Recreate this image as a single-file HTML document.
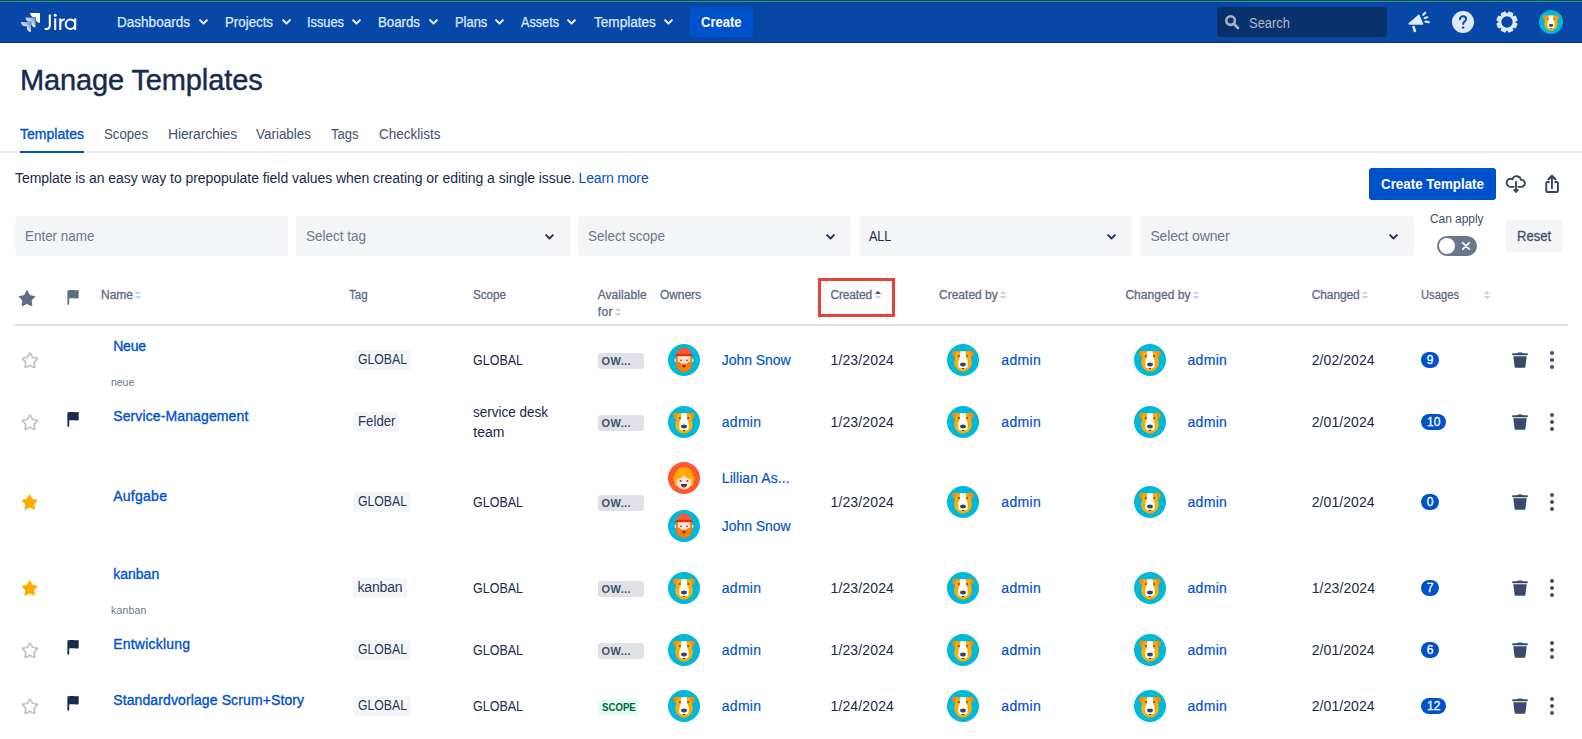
<!DOCTYPE html>
<html><head><meta charset="utf-8"><title>Manage Templates - Jira</title>
<style>
html,body{margin:0;padding:0;background:#fff;}
body{width:1582px;height:739px;position:relative;overflow:hidden;font-family:"Liberation Sans",sans-serif;}
.t{position:absolute;white-space:nowrap;line-height:1;}
.r{position:absolute;}
svg{position:absolute;overflow:visible;}
</style></head><body>
<svg width="0" height="0" style="left:0;top:0"><defs>
<linearGradient id="jg" x1="0.9" y1="0.1" x2="0.35" y2="0.7"><stop offset="0.15" stop-color="#fff" stop-opacity="0.5"/><stop offset="1" stop-color="#fff"/></linearGradient>
<symbol id="dog" viewBox="0 0 32 32">
<circle cx="16" cy="16" r="16" fill="#00B8D9"/>
<path d="M10.200 7.100c-2.700-.9-5.100.2-4.900 2.500.2 2.100 1.500 3.300 3.300 3.600z" fill="#FF8B00"/>
<path d="M21.800 7.100c2.700-.9 5.100.2 4.900 2.500-.2 2.100-1.500 3.300-3.300 3.600z" fill="#FF8B00"/>
<path d="M9.100 8.600C9.100 7.800 9.700 7.200 10.500 7.200H21.500C22.300 7.200 22.900 7.800 22.900 8.600L24.600 16.500C24.900 18.500 24.800 20.300 24.300 21.600 23.800 23 22.800 24 21.600 25.200L20 26.600C19.200 27.300 17.500 27.600 16 27.600 14.500 27.600 12.800 27.300 12 26.600L10.400 25.200C9.200 24 8.200 23 7.700 21.600 7.200 20.300 7.100 18.500 7.400 16.500Z" fill="#FFAB00"/>
<path d="M13.300 7.200H18.700L19 12.500C19.100 14.200 20.700 15.500 20.700 17.500V22C20.700 23.700 19.200 24.500 16 24.500 12.800 24.500 11.300 23.700 11.300 22V17.500C11.300 15.500 12.900 14.200 13 12.500Z" fill="#fff"/>
<ellipse cx="16" cy="20.500" rx="2.900" ry="1.900" fill="#344563"/>
<rect x="14.900" y="24" width="2.200" height="1.100" rx=".5" fill="#344563"/>
<circle cx="11.800" cy="12" r="1.100" fill="#505F79"/><circle cx="20.200" cy="12" r="1.100" fill="#505F79"/>
</symbol>
<symbol id="john" viewBox="0 0 32 32">
<circle cx="16" cy="16" r="16" fill="#00B8D9"/>
<ellipse cx="7.800" cy="16.200" rx="1.300" ry="1.800" fill="#FFD5C8"/><ellipse cx="24.200" cy="16.200" rx="1.300" ry="1.800" fill="#FFD5C8"/>
<path d="M8 12h16v8.200c0 1.500-.5 2.600-1.200 3.500-.3 1.300-1.300 2.200-2.500 2.500-.8 1.200-2.100 1.800-3.200 1.700-.7.500-1.500.5-2.200 0-1.100.1-2.400-.5-3.200-1.700-1.200-.3-2.200-1.200-2.500-2.500-.7-.9-1.200-2-1.200-3.500z" fill="#FF7A00"/>
<path d="M9.800 11.500h12.400v6.300c-1.300 0-2.600.8-3.400 1.700h-5.600c-.8-.9-2.100-1.700-3.400-1.700z" fill="#FFE3DA"/>
<path d="M8.700 10.600c0-4 3.200-6.800 7.300-6.800s7.300 2.800 7.300 6.800z" fill="#FF5630"/>
<rect x="7.300" y="10" width="17.400" height="2.200" rx="1" fill="#DE350B"/>
<rect x="12.200" y="15.600" width="1.700" height="1.500" fill="#505F79"/><rect x="18.100" y="15.600" width="1.700" height="1.500" fill="#505F79"/>
<path d="M14.200 21.300h3.600c0 1.300-.8 2.200-1.800 2.200s-1.800-.9-1.800-2.200z" fill="#344563"/>
</symbol>
<symbol id="lil" viewBox="0 0 32 32">
<circle cx="16" cy="16" r="16" fill="#FF5630"/>
<path d="M16 5.200c5 0 8.600 3.200 9 7.600 1.200 1 2.200 2.800 1.400 4.600-.6 1.300-1 1.800-.9 3.200.1 1.600-.6 3-1.700 3.400H8.200c-1.100-.4-1.800-1.800-1.700-3.400.1-1.400-.3-1.900-.9-3.200-.8-1.800.2-3.600 1.400-4.600.4-4.400 4-7.600 9-7.600z" fill="#FFAB00"/>
<path d="M8.600 17.500c2.800-.3 5.600-1.700 7.400-4.300 1.800 2.600 4.600 4 7.400 4.300v2.700c0 4-3.200 7.200-7.400 7.200s-7.400-3.200-7.400-7.200z" fill="#FFE3DA"/>
<rect x="11.700" y="18.100" width="1.700" height="1.600" fill="#344563"/><rect x="18.600" y="18.100" width="1.700" height="1.600" fill="#344563"/>
<path d="M12.900 22h6.200c0 2-1.400 3.500-3.100 3.500s-3.100-1.500-3.100-3.500z" fill="#253858"/>
<path d="M14.300 24.300c.5-.5 1.100-.7 1.700-.7s1.200.2 1.700.7c-.5.700-1.100 1.200-1.700 1.200s-1.200-.5-1.700-1.200z" fill="#DE350B"/>
</symbol>
<symbol id="starf" viewBox="0 0 16 16"><path d="M8 .6l2.250 4.900 5.250.6-3.900 3.650 1.050 5.350L8 12.450 3.350 15.100 4.400 9.750.5 6.100l5.250-.6z"/></symbol>
<symbol id="flag" viewBox="0 0 12 15"><path d="M.4 1.100C.4.500.8.200 1.300.200h1c3-.4 5.500.5 8.700-.1.400-.1.700.2.700.6v6.900c0 .4-.3.700-.7.800-3 .5-5.500-.5-8.800.1v5.600c0 .5-.4.800-.9.800s-.9-.3-.9-.8z"/></symbol>
<symbol id="trash" viewBox="0 0 16 16"><path d="M5.800.4h4.400l.5.900h4.600c.3 0 .5.200.5.500v.9c0 .3-.2.500-.5.500H.7c-.3 0-.5-.2-.5-.5v-.9c0-.3.200-.5.500-.5h4.600z"/><path d="M1.300 4.300h13.400l-1.300 10.400c-.1.700-.6 1.100-1.200 1.100H3.800c-.6 0-1.100-.4-1.200-1.100z"/></symbol>
<symbol id="chev" viewBox="0 0 10 7"><path d="M1.300 1.300L5 5l3.700-3.700" fill="none" stroke-width="2.200" stroke-linecap="round" stroke-linejoin="round"/></symbol>
<symbol id="sort" viewBox="0 0 6 8"><path d="M3 -.3l3.200 3.300H-.2z"/><path d="M3 8.300L-.2 5h6.400z"/></symbol>
</defs></svg>
<div class="r" style="left:0px;top:0px;width:1582px;height:43px;background:#0747A6;"></div>
<div class="r" style="left:0px;top:0px;width:1582px;height:1px;background:#005A5C;"></div>
<div class="r" style="left:0px;top:1px;width:1582px;height:1px;background:#40878A;"></div>
<div class="r" style="left:0px;top:42px;width:1582px;height:1px;background:#1C2B4F;"></div>
<svg style="left:21px;top:13px" width="19" height="19" viewBox="0 0 24 24"><path fill="#fff" d="M23.013 0H11.455a5.215 5.215 0 0 0 5.215 5.215h2.129v2.057A5.215 5.215 0 0 0 24 12.483V1.005A1.001 1.001 0 0 0 23.013 0Z"/><path fill="url(#jg)" d="M17.294 5.757H5.736a5.215 5.215 0 0 0 5.215 5.214h2.129v2.058a5.218 5.218 0 0 0 5.215 5.214V6.758a1.001 1.001 0 0 0-1.001-1.001z"/><path fill="url(#jg)" d="M11.571 11.513H0a5.218 5.218 0 0 0 5.232 5.215h2.130v2.057A5.215 5.215 0 0 0 12.575 24V12.518a1.005 1.005 0 0 0-1.005-1.005z"/></svg>
<svg style="left:0;top:0" width="90" height="43" viewBox="0 0 90 43"><g fill="none" stroke="#fff" stroke-width="2.050"><path d="M49.800 14.600v10.600c0 2.500-1.500 3.700-3.400 3.700-.6 0-1.200-.1-1.700-.3"/><path d="M55.200 18.400v11.600"/><path d="M60.300 18.400v11.600M60.300 24.500c0-3.300 1.700-5.200 4.500-5"/><circle cx="70.400" cy="24.300" r="4.700"/><path d="M75.200 18.400v11.600"/></g><circle cx="55.200" cy="15.300" r="1.500" fill="#fff"/></svg>
<span class="t" style="left:117.0px;top:15.45px;font-size:14px;color:#DEEBFF;transform:scaleX(0.9670);transform-origin:0 50%;-webkit-text-stroke:0.25px #DEEBFF;">Dashboards</span>
<svg style="left:198.7px;top:19.300px" width="9" height="6.300" viewBox="0 0 10 7"><path d="M1.300 1.300L5 5l3.700-3.700" fill="none" stroke="#DEEBFF" stroke-width="2.300" stroke-linecap="round" stroke-linejoin="round"/></svg>
<span class="t" style="left:225.0px;top:15.45px;font-size:14px;color:#DEEBFF;transform:scaleX(0.9491);transform-origin:0 50%;-webkit-text-stroke:0.25px #DEEBFF;">Projects</span>
<svg style="left:281.7px;top:19.300px" width="9" height="6.300" viewBox="0 0 10 7"><path d="M1.300 1.300L5 5l3.700-3.700" fill="none" stroke="#DEEBFF" stroke-width="2.300" stroke-linecap="round" stroke-linejoin="round"/></svg>
<span class="t" style="left:307.0px;top:15.45px;font-size:14px;color:#DEEBFF;transform:scaleX(0.9145);transform-origin:0 50%;-webkit-text-stroke:0.25px #DEEBFF;">Issues</span>
<svg style="left:352.2px;top:19.300px" width="9" height="6.300" viewBox="0 0 10 7"><path d="M1.300 1.300L5 5l3.700-3.700" fill="none" stroke="#DEEBFF" stroke-width="2.300" stroke-linecap="round" stroke-linejoin="round"/></svg>
<span class="t" style="left:378.0px;top:15.45px;font-size:14px;color:#DEEBFF;transform:scaleX(0.9468);transform-origin:0 50%;-webkit-text-stroke:0.25px #DEEBFF;">Boards</span>
<svg style="left:428.7px;top:19.300px" width="9" height="6.300" viewBox="0 0 10 7"><path d="M1.300 1.300L5 5l3.700-3.700" fill="none" stroke="#DEEBFF" stroke-width="2.300" stroke-linecap="round" stroke-linejoin="round"/></svg>
<span class="t" style="left:454.7px;top:15.45px;font-size:14px;color:#DEEBFF;transform:scaleX(0.9223);transform-origin:0 50%;-webkit-text-stroke:0.25px #DEEBFF;">Plans</span>
<svg style="left:495.2px;top:19.300px" width="9" height="6.300" viewBox="0 0 10 7"><path d="M1.300 1.300L5 5l3.700-3.700" fill="none" stroke="#DEEBFF" stroke-width="2.300" stroke-linecap="round" stroke-linejoin="round"/></svg>
<span class="t" style="left:521.0px;top:15.45px;font-size:14px;color:#DEEBFF;transform:scaleX(0.9045);transform-origin:0 50%;-webkit-text-stroke:0.25px #DEEBFF;">Assets</span>
<svg style="left:567.2px;top:19.300px" width="9" height="6.300" viewBox="0 0 10 7"><path d="M1.300 1.300L5 5l3.700-3.700" fill="none" stroke="#DEEBFF" stroke-width="2.300" stroke-linecap="round" stroke-linejoin="round"/></svg>
<span class="t" style="left:593.8px;top:15.45px;font-size:14px;color:#DEEBFF;transform:scaleX(0.9701);transform-origin:0 50%;-webkit-text-stroke:0.25px #DEEBFF;">Templates</span>
<svg style="left:663.7px;top:19.300px" width="9" height="6.300" viewBox="0 0 10 7"><path d="M1.300 1.300L5 5l3.700-3.700" fill="none" stroke="#DEEBFF" stroke-width="2.300" stroke-linecap="round" stroke-linejoin="round"/></svg>
<div class="r" style="left:690px;top:7px;width:63px;height:30px;background:#0052CC;border-radius:3px;"></div>
<span class="t" style="left:701.0px;top:15.15px;font-size:14px;color:#fff;font-weight:700;transform:scaleX(0.9316);transform-origin:0 50%;">Create</span>
<div class="r" style="left:1217px;top:7px;width:170px;height:30px;background:#09326C;border-radius:3px;"></div>
<svg style="left:1224px;top:14px" width="16" height="16" viewBox="0 0 16 16"><circle cx="6.600" cy="6.600" r="4.300" fill="none" stroke="#ABB3C0" stroke-width="2.600"/><path d="M10.200 10.200l3.800 3.800" stroke="#ABB3C0" stroke-width="2.700" stroke-linecap="round"/></svg>
<span class="t" style="left:1249.0px;top:15.65px;font-size:14px;color:#B3BAC5;transform:scaleX(0.9243);transform-origin:0 50%;">Search</span>
<svg style="left:1400px;top:5px" width="40" height="35" viewBox="0 0 40 35"><path d="M9.200 18.600L18.900 10.200l3.700 8.900H9.600z" fill="#DEEBFF" stroke="#DEEBFF" stroke-width="1.400" stroke-linejoin="round"/><path d="M13.300 21l1.900 6" stroke="#DEEBFF" stroke-width="2.500" stroke-linecap="butt"/><g stroke="#DEEBFF" stroke-width="2.200" stroke-linecap="round"><path d="M23.300 9.800l1.900-2"/><path d="M24.700 13l2.600-.7"/><path d="M25.500 16.650l3.300.45"/></g></svg>
<svg style="left:1452px;top:11px" width="22" height="22" viewBox="0 0 22 22"><circle cx="11" cy="11" r="11" fill="#DEEBFF"/><path d="M7.900 8.300c0-1.900 1.400-3 3.100-3s3.100 1.100 3.100 2.800c0 2.400-3 2.400-3 5" fill="none" stroke="#0747A6" stroke-width="1.900" stroke-linecap="round"/><circle cx="11.100" cy="16.600" r="1.200" fill="#0747A6"/></svg>
<svg style="left:1496px;top:10.800px" width="22" height="22" viewBox="0 0 22 22"><path d="M11.00 3.60 L12.81 0.76 L16.97 2.48 L16.23 5.77 L16.23 5.77 L19.52 5.03 L21.24 9.19 L18.40 11.00 L18.40 11.00 L21.24 12.81 L19.52 16.97 L16.23 16.23 L16.23 16.23 L16.97 19.52 L12.81 21.24 L11.00 18.40 L11.00 18.40 L9.19 21.24 L5.03 19.52 L5.77 16.23 L5.77 16.23 L2.48 16.97 L0.76 12.81 L3.60 11.00 L3.60 11.00 L0.76 9.19 L2.48 5.03 L5.77 5.77 L5.77 5.77 L5.03 2.48 L9.19 0.76 L11.00 3.60Z" fill="#DEEBFF" stroke="#DEEBFF" stroke-width="0.900" stroke-linejoin="round"/><circle cx="11" cy="11" r="5.700" fill="#0747A6"/></svg>
<svg style="left:1539px;top:10px" width="24" height="24"><use href="#dog" width="24" height="24"/></svg>
<span class="t" style="left:20.0px;top:66.35px;font-size:29px;color:#172B4D;letter-spacing:-0.125px;-webkit-text-stroke:0.45px #172B4D;">Manage Templates</span>
<div class="r" style="left:0px;top:151px;width:1582px;height:2px;background:#EBECF0;"></div>
<div class="r" style="left:20px;top:151px;width:64px;height:2px;background:#0052CC;"></div>
<span class="t" style="left:20.0px;top:126.75px;font-size:14px;color:#0052CC;letter-spacing:0.022px;-webkit-text-stroke:0.35px #0052CC;">Templates</span>
<span class="t" style="left:104.0px;top:126.75px;font-size:14px;color:#42526E;transform:scaleX(0.9423);transform-origin:0 50%;">Scopes</span>
<span class="t" style="left:168.0px;top:126.75px;font-size:14px;color:#42526E;letter-spacing:-0.164px;">Hierarchies</span>
<span class="t" style="left:256.0px;top:126.75px;font-size:14px;color:#42526E;transform:scaleX(0.9594);transform-origin:0 50%;">Variables</span>
<span class="t" style="left:331.0px;top:126.75px;font-size:14px;color:#42526E;transform:scaleX(0.9299);transform-origin:0 50%;">Tags</span>
<span class="t" style="left:378.5px;top:126.75px;font-size:14px;color:#42526E;transform:scaleX(0.9640);transform-origin:0 50%;">Checklists</span>
<span class="t" style="left:15.0px;top:171.15px;font-size:14px;color:#172B4D;letter-spacing:-0.054px;">Template is an easy way to prepopulate field values when creating or editing a single issue.</span>
<span class="t" style="left:578.5px;top:171.15px;font-size:14px;color:#0052CC;letter-spacing:-0.159px;">Learn more</span>
<div class="r" style="left:1369px;top:168px;width:127px;height:32px;background:#0052CC;border-radius:3px;"></div>
<span class="t" style="left:1381.0px;top:177.15px;font-size:14px;color:#fff;font-weight:700;transform:scaleX(0.9547);transform-origin:0 50%;">Create Template</span>
<svg style="left:1495px;top:165px" width="80" height="40" viewBox="0 0 80 40"><g fill="none" stroke="#344563" stroke-width="1.900" stroke-linecap="round" stroke-linejoin="round">
<path d="M18.700 21.850H15.600A4 4 0 1 1 17.500 14.300A4.300 4.300 0 0 1 25.900 14.900A3.500 3.500 0 1 1 26.800 21.850H23.400"/>
<path d="M21 16.800v8"/>
<path d="M53.900 17.050H52.250a1 1 0 0 0-1 1V25.950a1 1 0 0 0 1 1H61.950a1 1 0 0 0 1-1V18.050a1 1 0 0 0-1-1H60.300"/>
<path d="M56.950 11.600V23.300"/>
<path d="M53.500 14.300L56.950 10.850L60.400 14.300" stroke-width="2.200"/>
</g><path d="M18.500 24.700h5L21 27.500z" fill="#344563" stroke="#344563" stroke-width="1.100" stroke-linejoin="round"/></svg>
<div class="r" style="left:15px;top:216px;width:273px;height:40px;background:#F4F5F7;border-radius:3px;"></div>
<span class="t" style="left:25.4px;top:228.85px;font-size:14px;color:#6B778C;transform:scaleX(0.9590);transform-origin:0 50%;">Enter name</span>
<div class="r" style="left:296px;top:216px;width:274px;height:40px;background:#F4F5F7;border-radius:3px;"></div>
<span class="t" style="left:306.4px;top:228.85px;font-size:14px;color:#6B778C;transform:scaleX(0.9637);transform-origin:0 50%;">Select tag</span>
<svg style="left:545.1px;top:233.700px" width="9" height="6.300" viewBox="0 0 10 7"><use href="#chev" stroke="#253858"/></svg>
<div class="r" style="left:578px;top:216px;width:273px;height:40px;background:#F4F5F7;border-radius:3px;"></div>
<span class="t" style="left:588.4px;top:228.85px;font-size:14px;color:#6B778C;transform:scaleX(0.9606);transform-origin:0 50%;">Select scope</span>
<svg style="left:826.1px;top:233.700px" width="9" height="6.300" viewBox="0 0 10 7"><use href="#chev" stroke="#253858"/></svg>
<div class="r" style="left:859px;top:216px;width:273px;height:40px;background:#F4F5F7;border-radius:3px;"></div>
<span class="t" style="left:869.4px;top:228.85px;font-size:14px;color:#172B4D;transform:scaleX(0.8952);transform-origin:0 50%;">ALL</span>
<svg style="left:1107.1px;top:233.700px" width="9" height="6.300" viewBox="0 0 10 7"><use href="#chev" stroke="#253858"/></svg>
<div class="r" style="left:1140px;top:216px;width:274px;height:40px;background:#F4F5F7;border-radius:3px;"></div>
<span class="t" style="left:1150.4px;top:228.85px;font-size:14px;color:#6B778C;letter-spacing:-0.161px;">Select owner</span>
<svg style="left:1389.1px;top:233.700px" width="9" height="6.300" viewBox="0 0 10 7"><use href="#chev" stroke="#253858"/></svg>
<span class="t" style="left:1430.0px;top:212.84px;font-size:12px;color:#42526E;letter-spacing:-0.059px;">Can apply</span>
<div class="r" style="left:1437px;top:236px;width:40px;height:20px;background:#6B778C;border-radius:10px;"></div>
<div class="r" style="left:1439px;top:238px;width:16px;height:16px;border-radius:8px;background:#fff"></div>
<svg style="left:1461px;top:241px" width="10" height="10" viewBox="0 0 10 10"><path d="M1.800 1.800l6.400 6.400M8.200 1.800L1.800 8.200" stroke="#fff" stroke-width="1.800" stroke-linecap="round"/></svg>
<div class="r" style="left:1505px;top:220px;width:58px;height:32px;background:#F4F5F7;border-radius:3px;"></div>
<span class="t" style="left:1517.0px;top:229.15px;font-size:14px;color:#42526E;transform:scaleX(0.9297);transform-origin:0 50%;-webkit-text-stroke:0.3px #42526E;">Reset</span>
<svg style="left:15.80px;top:287.90px" width="22.00" height="22.00" viewBox="0 0 22.00 22.00"><path d="M10.37 2.84Q11.00 1.65 11.63 2.84L13.57 6.52Q13.86 7.07 14.46 7.17L18.56 7.88Q19.89 8.11 18.95 9.08L16.05 12.06Q15.62 12.50 15.71 13.11L16.30 17.23Q16.50 18.56 15.29 17.97L11.55 16.13Q11.00 15.86 10.45 16.13L6.71 17.97Q5.50 18.56 5.70 17.23L6.29 13.11Q6.38 12.50 5.95 12.06L3.05 9.08Q2.11 8.11 3.44 7.88L7.54 7.17Q8.14 7.07 8.43 6.52Z" fill="#5E6C84"/></svg>
<svg style="left:67.100px;top:290.200px" width="12" height="15" viewBox="0 0 12 15"><use href="#flag" fill="#5E6C84"/></svg>
<span class="t" style="left:101.0px;top:288.54px;font-size:12px;color:#5E6C84;letter-spacing:-0.002px;-webkit-text-stroke:0.3px #5E6C84;">Name</span>
<svg style="left:135.2px;top:290.59999999999997px" width="6" height="8" viewBox="0 0 6 8"><use href="#sort" fill="#CFD3DA"/></svg>
<span class="t" style="left:349.0px;top:288.54px;font-size:12px;color:#5E6C84;transform:scaleX(0.9614);transform-origin:0 50%;-webkit-text-stroke:0.3px #5E6C84;">Tag</span>
<span class="t" style="left:473.3px;top:288.54px;font-size:12px;color:#5E6C84;transform:scaleX(0.9669);transform-origin:0 50%;-webkit-text-stroke:0.3px #5E6C84;">Scope</span>
<span class="t" style="left:597.7px;top:288.54px;font-size:12px;color:#5E6C84;letter-spacing:0.069px;-webkit-text-stroke:0.3px #5E6C84;">Available</span>
<span class="t" style="left:597.7px;top:306.14px;font-size:12px;color:#5E6C84;letter-spacing:0.432px;-webkit-text-stroke:0.3px #5E6C84;">for</span>
<svg style="left:615.2px;top:308.2px" width="6" height="8" viewBox="0 0 6 8"><use href="#sort" fill="#CFD3DA"/></svg>
<span class="t" style="left:660.0px;top:288.54px;font-size:12px;color:#5E6C84;letter-spacing:-0.074px;-webkit-text-stroke:0.3px #5E6C84;">Owners</span>
<span class="t" style="left:830.5px;top:288.54px;font-size:12px;color:#5E6C84;letter-spacing:-0.170px;-webkit-text-stroke:0.3px #5E6C84;">Created</span>
<svg style="left:875.2px;top:290.59999999999997px" width="6" height="8" viewBox="0 0 6 8"><path d="M3 -.3l3.200 3.300H-.2z" fill="#4C5B78"/><path d="M3 8.300L-.2 5h6.400z" fill="#CFD3DA"/></svg>
<span class="t" style="left:939.0px;top:288.54px;font-size:12px;color:#5E6C84;letter-spacing:0.010px;-webkit-text-stroke:0.3px #5E6C84;">Created by</span>
<svg style="left:1000px;top:290.59999999999997px" width="6" height="8" viewBox="0 0 6 8"><use href="#sort" fill="#CFD3DA"/></svg>
<span class="t" style="left:1125.4px;top:288.54px;font-size:12px;color:#5E6C84;letter-spacing:0.039px;-webkit-text-stroke:0.3px #5E6C84;">Changed by</span>
<svg style="left:1193.3px;top:290.59999999999997px" width="6" height="8" viewBox="0 0 6 8"><use href="#sort" fill="#CFD3DA"/></svg>
<span class="t" style="left:1311.7px;top:288.54px;font-size:12px;color:#5E6C84;letter-spacing:-0.101px;-webkit-text-stroke:0.3px #5E6C84;">Changed</span>
<svg style="left:1362px;top:290.59999999999997px" width="6" height="8" viewBox="0 0 6 8"><use href="#sort" fill="#CFD3DA"/></svg>
<span class="t" style="left:1420.8px;top:288.54px;font-size:12px;color:#5E6C84;transform:scaleX(0.9340);transform-origin:0 50%;-webkit-text-stroke:0.3px #5E6C84;">Usages</span>
<svg style="left:1484.2px;top:290.59999999999997px" width="6" height="8" viewBox="0 0 6 8"><use href="#sort" fill="#CFD3DA"/></svg>
<div class="r" style="left:818px;top:278px;width:71px;height:33px;border:3px solid #E8403A;"></div>
<div class="r" style="left:15px;top:324px;width:1553px;height:2px;background:#DFE1E6;"></div>
<svg style="left:18.95px;top:349.55px" width="21.90" height="21.90" viewBox="0 0 21.90 21.90"><path d="M10.38 3.60Q10.95 2.53 11.52 3.60L13.27 6.92Q13.53 7.41 14.07 7.50L17.77 8.14Q18.96 8.35 18.12 9.22L15.50 11.91Q15.12 12.30 15.20 12.85L15.73 16.56Q15.90 17.77 14.81 17.23L11.45 15.57Q10.95 15.33 10.45 15.57L7.09 17.23Q6.00 17.77 6.17 16.56L6.70 12.85Q6.78 12.30 6.40 11.91L3.78 9.22Q2.94 8.35 4.13 8.14L7.83 7.50Q8.37 7.41 8.63 6.92Z" fill="none" stroke="#C1C3C6" stroke-width="1.75" stroke-linejoin="round"/></svg>
<span class="t" style="left:113.2px;top:339.35px;font-size:14px;color:#0052CC;letter-spacing:-0.192px;-webkit-text-stroke:0.35px #0052CC;">Neue</span>
<span class="t" style="left:111.0px;top:377.11px;font-size:10.5px;color:#6B778C;letter-spacing:-0.039px;">neue</span>
<div class="r" style="left:353px;top:350px;width:58px;height:20px;background:#F4F5F7;border-radius:3px;"></div>
<span class="t" style="left:357.5px;top:352.35px;font-size:14px;color:#253858;transform:scaleX(0.8746);transform-origin:0 50%;">GLOBAL</span>
<span class="t" style="left:473.3px;top:353.05px;font-size:14px;color:#172B4D;transform:scaleX(0.8925);transform-origin:0 50%;">GLOBAL</span>
<div class="r" style="left:598px;top:353px;width:46px;height:16px;background:#DFE1E6;border-radius:3px;"></div>
<span class="t" style="left:601.5px;top:356.49px;font-size:11px;color:#42526E;font-weight:700;letter-spacing:0.400px;">OW...</span>
<svg style="left:668.0px;top:344.0px" width="32" height="32"><use href="#john" width="32" height="32"/></svg>
<span class="t" style="left:721.8px;top:353.15px;font-size:14px;color:#0052CC;letter-spacing:-0.052px;-webkit-text-stroke:0.15px #0052CC;">John Snow</span>
<span class="t" style="left:830.5px;top:353.15px;font-size:14px;color:#172B4D;letter-spacing:0.136px;">1/23/2024</span>
<svg style="left:947.0px;top:344.0px" width="32" height="32"><use href="#dog" width="32" height="32"/></svg>
<span class="t" style="left:1001.3px;top:353.15px;font-size:14px;color:#0052CC;letter-spacing:0.314px;-webkit-text-stroke:0.2px #0052CC;">admin</span>
<svg style="left:1134.0px;top:344.0px" width="32" height="32"><use href="#dog" width="32" height="32"/></svg>
<span class="t" style="left:1187.5px;top:353.15px;font-size:14px;color:#0052CC;letter-spacing:0.314px;-webkit-text-stroke:0.2px #0052CC;">admin</span>
<span class="t" style="left:1311.7px;top:353.15px;font-size:14px;color:#172B4D;letter-spacing:0.080px;">2/02/2024</span>
<div class="r" style="left:1421px;top:352px;width:18px;height:16px;background:#0052CC;border-radius:8px;"></div>
<span class="t" style="left:1426.8px;top:354.14px;font-size:12px;color:#fff;letter-spacing:0.027px;-webkit-text-stroke:0.3px #fff;">9</span>
<svg style="left:1512px;top:352px" width="16" height="16" viewBox="0 0 16 16"><use href="#trash" fill="#3B4A6B"/></svg>
<svg style="left:1548px;top:350px" width="8" height="20" viewBox="0 0 8 20"><circle cx="4" cy="3" r="2" fill="#42526E"/><circle cx="4" cy="10" r="2" fill="#42526E"/><circle cx="4" cy="17" r="2" fill="#42526E"/></svg>
<svg style="left:18.95px;top:411.55px" width="21.90" height="21.90" viewBox="0 0 21.90 21.90"><path d="M10.38 3.60Q10.95 2.53 11.52 3.60L13.27 6.92Q13.53 7.41 14.07 7.50L17.77 8.14Q18.96 8.35 18.12 9.22L15.50 11.91Q15.12 12.30 15.20 12.85L15.73 16.56Q15.90 17.77 14.81 17.23L11.45 15.57Q10.95 15.33 10.45 15.57L7.09 17.23Q6.00 17.77 6.17 16.56L6.70 12.85Q6.78 12.30 6.40 11.91L3.78 9.22Q2.94 8.35 4.13 8.14L7.83 7.50Q8.37 7.41 8.63 6.92Z" fill="none" stroke="#C1C3C6" stroke-width="1.75" stroke-linejoin="round"/></svg>
<svg style="left:67.000px;top:412.3px" width="12" height="15" viewBox="0 0 12 15"><use href="#flag" fill="#172B4D"/></svg>
<span class="t" style="left:113.2px;top:409.35px;font-size:14px;color:#0052CC;letter-spacing:0.119px;-webkit-text-stroke:0.35px #0052CC;">Service-Management</span>
<div class="r" style="left:353px;top:412px;width:46px;height:20px;background:#F4F5F7;border-radius:3px;"></div>
<span class="t" style="left:357.5px;top:414.35px;font-size:14px;color:#253858;transform:scaleX(0.9450);transform-origin:0 50%;">Felder</span>
<span class="t" style="left:473.3px;top:405.25px;font-size:14px;color:#172B4D;transform:scaleX(0.9639);transform-origin:0 50%;">service desk</span>
<span class="t" style="left:473.3px;top:425.25px;font-size:14px;color:#172B4D;letter-spacing:-0.031px;">team</span>
<div class="r" style="left:598px;top:415px;width:46px;height:16px;background:#DFE1E6;border-radius:3px;"></div>
<span class="t" style="left:601.5px;top:418.49px;font-size:11px;color:#42526E;font-weight:700;letter-spacing:0.400px;">OW...</span>
<svg style="left:668.0px;top:406.0px" width="32" height="32"><use href="#dog" width="32" height="32"/></svg>
<span class="t" style="left:721.8px;top:415.15px;font-size:14px;color:#0052CC;letter-spacing:0.274px;-webkit-text-stroke:0.15px #0052CC;">admin</span>
<span class="t" style="left:830.5px;top:415.15px;font-size:14px;color:#172B4D;letter-spacing:0.136px;">1/23/2024</span>
<svg style="left:947.0px;top:406.0px" width="32" height="32"><use href="#dog" width="32" height="32"/></svg>
<span class="t" style="left:1001.3px;top:415.15px;font-size:14px;color:#0052CC;letter-spacing:0.314px;-webkit-text-stroke:0.2px #0052CC;">admin</span>
<svg style="left:1134.0px;top:406.0px" width="32" height="32"><use href="#dog" width="32" height="32"/></svg>
<span class="t" style="left:1187.5px;top:415.15px;font-size:14px;color:#0052CC;letter-spacing:0.314px;-webkit-text-stroke:0.2px #0052CC;">admin</span>
<span class="t" style="left:1311.7px;top:415.15px;font-size:14px;color:#172B4D;letter-spacing:0.080px;">2/01/2024</span>
<div class="r" style="left:1421px;top:414px;width:25px;height:16px;background:#0052CC;border-radius:8px;"></div>
<span class="t" style="left:1427.0px;top:416.14px;font-size:12px;color:#fff;letter-spacing:0.027px;-webkit-text-stroke:0.3px #fff;">10</span>
<svg style="left:1512px;top:414px" width="16" height="16" viewBox="0 0 16 16"><use href="#trash" fill="#3B4A6B"/></svg>
<svg style="left:1548px;top:412px" width="8" height="20" viewBox="0 0 8 20"><circle cx="4" cy="3" r="2" fill="#42526E"/><circle cx="4" cy="10" r="2" fill="#42526E"/><circle cx="4" cy="17" r="2" fill="#42526E"/></svg>
<svg style="left:19.30px;top:491.75px" width="21.40" height="21.40" viewBox="0 0 21.40 21.40"><path d="M10.09 2.80Q10.70 1.65 11.31 2.80L13.19 6.37Q13.47 6.89 14.05 6.99L18.02 7.68Q19.31 7.90 18.40 8.84L15.59 11.73Q15.18 12.15 15.26 12.74L15.83 16.73Q16.02 18.02 14.85 17.45L11.23 15.67Q10.70 15.41 10.17 15.67L6.55 17.45Q5.38 18.02 5.57 16.73L6.14 12.74Q6.22 12.15 5.81 11.73L3.00 8.84Q2.09 7.90 3.38 7.68L7.35 6.99Q7.93 6.89 8.21 6.37Z" fill="#FFAB00"/></svg>
<span class="t" style="left:113.2px;top:489.35px;font-size:14px;color:#0052CC;letter-spacing:0.263px;-webkit-text-stroke:0.35px #0052CC;">Aufgabe</span>
<div class="r" style="left:353px;top:492px;width:58px;height:20px;background:#F4F5F7;border-radius:3px;"></div>
<span class="t" style="left:357.5px;top:494.35px;font-size:14px;color:#253858;transform:scaleX(0.8746);transform-origin:0 50%;">GLOBAL</span>
<span class="t" style="left:473.3px;top:495.05px;font-size:14px;color:#172B4D;transform:scaleX(0.8925);transform-origin:0 50%;">GLOBAL</span>
<div class="r" style="left:598px;top:495px;width:46px;height:16px;background:#DFE1E6;border-radius:3px;"></div>
<span class="t" style="left:601.5px;top:498.49px;font-size:11px;color:#42526E;font-weight:700;letter-spacing:0.400px;">OW...</span>
<svg style="left:668.0px;top:462.0px" width="32" height="32"><use href="#lil" width="32" height="32"/></svg>
<span class="t" style="left:721.8px;top:471.15px;font-size:14px;color:#0052CC;letter-spacing:0.067px;-webkit-text-stroke:0.15px #0052CC;">Lillian As...</span>
<svg style="left:668.0px;top:510.0px" width="32" height="32"><use href="#john" width="32" height="32"/></svg>
<span class="t" style="left:721.8px;top:519.15px;font-size:14px;color:#0052CC;letter-spacing:-0.052px;-webkit-text-stroke:0.15px #0052CC;">John Snow</span>
<span class="t" style="left:830.5px;top:495.15px;font-size:14px;color:#172B4D;letter-spacing:0.136px;">1/23/2024</span>
<svg style="left:947.0px;top:486.0px" width="32" height="32"><use href="#dog" width="32" height="32"/></svg>
<span class="t" style="left:1001.3px;top:495.15px;font-size:14px;color:#0052CC;letter-spacing:0.314px;-webkit-text-stroke:0.2px #0052CC;">admin</span>
<svg style="left:1134.0px;top:486.0px" width="32" height="32"><use href="#dog" width="32" height="32"/></svg>
<span class="t" style="left:1187.5px;top:495.15px;font-size:14px;color:#0052CC;letter-spacing:0.314px;-webkit-text-stroke:0.2px #0052CC;">admin</span>
<span class="t" style="left:1311.7px;top:495.15px;font-size:14px;color:#172B4D;letter-spacing:0.080px;">2/01/2024</span>
<div class="r" style="left:1421px;top:494px;width:18px;height:16px;background:#0052CC;border-radius:8px;"></div>
<span class="t" style="left:1426.8px;top:496.14px;font-size:12px;color:#fff;letter-spacing:0.027px;-webkit-text-stroke:0.3px #fff;">0</span>
<svg style="left:1512px;top:494px" width="16" height="16" viewBox="0 0 16 16"><use href="#trash" fill="#3B4A6B"/></svg>
<svg style="left:1548px;top:492px" width="8" height="20" viewBox="0 0 8 20"><circle cx="4" cy="3" r="2" fill="#42526E"/><circle cx="4" cy="10" r="2" fill="#42526E"/><circle cx="4" cy="17" r="2" fill="#42526E"/></svg>
<svg style="left:19.30px;top:577.75px" width="21.40" height="21.40" viewBox="0 0 21.40 21.40"><path d="M10.09 2.80Q10.70 1.65 11.31 2.80L13.19 6.37Q13.47 6.89 14.05 6.99L18.02 7.68Q19.31 7.90 18.40 8.84L15.59 11.73Q15.18 12.15 15.26 12.74L15.83 16.73Q16.02 18.02 14.85 17.45L11.23 15.67Q10.70 15.41 10.17 15.67L6.55 17.45Q5.38 18.02 5.57 16.73L6.14 12.74Q6.22 12.15 5.81 11.73L3.00 8.84Q2.09 7.90 3.38 7.68L7.35 6.99Q7.93 6.89 8.21 6.37Z" fill="#FFAB00"/></svg>
<span class="t" style="left:113.2px;top:567.35px;font-size:14px;color:#0052CC;letter-spacing:0.012px;-webkit-text-stroke:0.35px #0052CC;">kanban</span>
<span class="t" style="left:111.0px;top:605.11px;font-size:10.5px;color:#6B778C;letter-spacing:0.176px;">kanban</span>
<div class="r" style="left:353px;top:578px;width:54px;height:20px;background:#F4F5F7;border-radius:3px;"></div>
<span class="t" style="left:357.5px;top:580.35px;font-size:14px;color:#253858;letter-spacing:-0.155px;">kanban</span>
<span class="t" style="left:473.3px;top:581.05px;font-size:14px;color:#172B4D;transform:scaleX(0.8925);transform-origin:0 50%;">GLOBAL</span>
<div class="r" style="left:598px;top:581px;width:46px;height:16px;background:#DFE1E6;border-radius:3px;"></div>
<span class="t" style="left:601.5px;top:584.49px;font-size:11px;color:#42526E;font-weight:700;letter-spacing:0.400px;">OW...</span>
<svg style="left:668.0px;top:572.0px" width="32" height="32"><use href="#dog" width="32" height="32"/></svg>
<span class="t" style="left:721.8px;top:581.15px;font-size:14px;color:#0052CC;letter-spacing:0.274px;-webkit-text-stroke:0.15px #0052CC;">admin</span>
<span class="t" style="left:830.5px;top:581.15px;font-size:14px;color:#172B4D;letter-spacing:0.136px;">1/23/2024</span>
<svg style="left:947.0px;top:572.0px" width="32" height="32"><use href="#dog" width="32" height="32"/></svg>
<span class="t" style="left:1001.3px;top:581.15px;font-size:14px;color:#0052CC;letter-spacing:0.314px;-webkit-text-stroke:0.2px #0052CC;">admin</span>
<svg style="left:1134.0px;top:572.0px" width="32" height="32"><use href="#dog" width="32" height="32"/></svg>
<span class="t" style="left:1187.5px;top:581.15px;font-size:14px;color:#0052CC;letter-spacing:0.314px;-webkit-text-stroke:0.2px #0052CC;">admin</span>
<span class="t" style="left:1311.7px;top:581.15px;font-size:14px;color:#172B4D;letter-spacing:0.136px;">1/23/2024</span>
<div class="r" style="left:1421px;top:580px;width:18px;height:16px;background:#0052CC;border-radius:8px;"></div>
<span class="t" style="left:1426.8px;top:582.14px;font-size:12px;color:#fff;letter-spacing:0.027px;-webkit-text-stroke:0.3px #fff;">7</span>
<svg style="left:1512px;top:580px" width="16" height="16" viewBox="0 0 16 16"><use href="#trash" fill="#3B4A6B"/></svg>
<svg style="left:1548px;top:578px" width="8" height="20" viewBox="0 0 8 20"><circle cx="4" cy="3" r="2" fill="#42526E"/><circle cx="4" cy="10" r="2" fill="#42526E"/><circle cx="4" cy="17" r="2" fill="#42526E"/></svg>
<svg style="left:18.95px;top:639.55px" width="21.90" height="21.90" viewBox="0 0 21.90 21.90"><path d="M10.38 3.60Q10.95 2.53 11.52 3.60L13.27 6.92Q13.53 7.41 14.07 7.50L17.77 8.14Q18.96 8.35 18.12 9.22L15.50 11.91Q15.12 12.30 15.20 12.85L15.73 16.56Q15.90 17.77 14.81 17.23L11.45 15.57Q10.95 15.33 10.45 15.57L7.09 17.23Q6.00 17.77 6.17 16.56L6.70 12.85Q6.78 12.30 6.40 11.91L3.78 9.22Q2.94 8.35 4.13 8.14L7.83 7.50Q8.37 7.41 8.63 6.92Z" fill="none" stroke="#C1C3C6" stroke-width="1.75" stroke-linejoin="round"/></svg>
<svg style="left:67.000px;top:640.3px" width="12" height="15" viewBox="0 0 12 15"><use href="#flag" fill="#172B4D"/></svg>
<span class="t" style="left:113.2px;top:637.35px;font-size:14px;color:#0052CC;letter-spacing:0.209px;-webkit-text-stroke:0.35px #0052CC;">Entwicklung</span>
<div class="r" style="left:353px;top:640px;width:58px;height:20px;background:#F4F5F7;border-radius:3px;"></div>
<span class="t" style="left:357.5px;top:642.35px;font-size:14px;color:#253858;transform:scaleX(0.8746);transform-origin:0 50%;">GLOBAL</span>
<span class="t" style="left:473.3px;top:643.05px;font-size:14px;color:#172B4D;transform:scaleX(0.8925);transform-origin:0 50%;">GLOBAL</span>
<div class="r" style="left:598px;top:643px;width:46px;height:16px;background:#DFE1E6;border-radius:3px;"></div>
<span class="t" style="left:601.5px;top:646.49px;font-size:11px;color:#42526E;font-weight:700;letter-spacing:0.400px;">OW...</span>
<svg style="left:668.0px;top:634.0px" width="32" height="32"><use href="#dog" width="32" height="32"/></svg>
<span class="t" style="left:721.8px;top:643.15px;font-size:14px;color:#0052CC;letter-spacing:0.274px;-webkit-text-stroke:0.15px #0052CC;">admin</span>
<span class="t" style="left:830.5px;top:643.15px;font-size:14px;color:#172B4D;letter-spacing:0.136px;">1/23/2024</span>
<svg style="left:947.0px;top:634.0px" width="32" height="32"><use href="#dog" width="32" height="32"/></svg>
<span class="t" style="left:1001.3px;top:643.15px;font-size:14px;color:#0052CC;letter-spacing:0.314px;-webkit-text-stroke:0.2px #0052CC;">admin</span>
<svg style="left:1134.0px;top:634.0px" width="32" height="32"><use href="#dog" width="32" height="32"/></svg>
<span class="t" style="left:1187.5px;top:643.15px;font-size:14px;color:#0052CC;letter-spacing:0.314px;-webkit-text-stroke:0.2px #0052CC;">admin</span>
<span class="t" style="left:1311.7px;top:643.15px;font-size:14px;color:#172B4D;letter-spacing:0.080px;">2/01/2024</span>
<div class="r" style="left:1421px;top:642px;width:18px;height:16px;background:#0052CC;border-radius:8px;"></div>
<span class="t" style="left:1426.8px;top:644.14px;font-size:12px;color:#fff;letter-spacing:0.027px;-webkit-text-stroke:0.3px #fff;">6</span>
<svg style="left:1512px;top:642px" width="16" height="16" viewBox="0 0 16 16"><use href="#trash" fill="#3B4A6B"/></svg>
<svg style="left:1548px;top:640px" width="8" height="20" viewBox="0 0 8 20"><circle cx="4" cy="3" r="2" fill="#42526E"/><circle cx="4" cy="10" r="2" fill="#42526E"/><circle cx="4" cy="17" r="2" fill="#42526E"/></svg>
<svg style="left:18.95px;top:695.55px" width="21.90" height="21.90" viewBox="0 0 21.90 21.90"><path d="M10.38 3.60Q10.95 2.53 11.52 3.60L13.27 6.92Q13.53 7.41 14.07 7.50L17.77 8.14Q18.96 8.35 18.12 9.22L15.50 11.91Q15.12 12.30 15.20 12.85L15.73 16.56Q15.90 17.77 14.81 17.23L11.45 15.57Q10.95 15.33 10.45 15.57L7.09 17.23Q6.00 17.77 6.17 16.56L6.70 12.85Q6.78 12.30 6.40 11.91L3.78 9.22Q2.94 8.35 4.13 8.14L7.83 7.50Q8.37 7.41 8.63 6.92Z" fill="none" stroke="#C1C3C6" stroke-width="1.75" stroke-linejoin="round"/></svg>
<svg style="left:67.000px;top:696.3px" width="12" height="15" viewBox="0 0 12 15"><use href="#flag" fill="#172B4D"/></svg>
<span class="t" style="left:113.2px;top:693.35px;font-size:14px;color:#0052CC;letter-spacing:0.114px;-webkit-text-stroke:0.35px #0052CC;">Standardvorlage Scrum+Story</span>
<div class="r" style="left:353px;top:696px;width:58px;height:20px;background:#F4F5F7;border-radius:3px;"></div>
<span class="t" style="left:357.5px;top:698.35px;font-size:14px;color:#253858;transform:scaleX(0.8746);transform-origin:0 50%;">GLOBAL</span>
<span class="t" style="left:473.3px;top:699.05px;font-size:14px;color:#172B4D;transform:scaleX(0.8925);transform-origin:0 50%;">GLOBAL</span>
<div class="r" style="left:598px;top:699px;width:41px;height:16px;background:#E3FCEF;border-radius:3px;"></div>
<span class="t" style="left:601.6px;top:702.49px;font-size:11px;color:#006644;font-weight:700;transform:scaleX(0.8776);transform-origin:0 50%;">SCOPE</span>
<svg style="left:668.0px;top:690.0px" width="32" height="32"><use href="#dog" width="32" height="32"/></svg>
<span class="t" style="left:721.8px;top:699.15px;font-size:14px;color:#0052CC;letter-spacing:0.274px;-webkit-text-stroke:0.15px #0052CC;">admin</span>
<span class="t" style="left:830.5px;top:699.15px;font-size:14px;color:#172B4D;letter-spacing:0.136px;">1/24/2024</span>
<svg style="left:947.0px;top:690.0px" width="32" height="32"><use href="#dog" width="32" height="32"/></svg>
<span class="t" style="left:1001.3px;top:699.15px;font-size:14px;color:#0052CC;letter-spacing:0.314px;-webkit-text-stroke:0.2px #0052CC;">admin</span>
<svg style="left:1134.0px;top:690.0px" width="32" height="32"><use href="#dog" width="32" height="32"/></svg>
<span class="t" style="left:1187.5px;top:699.15px;font-size:14px;color:#0052CC;letter-spacing:0.314px;-webkit-text-stroke:0.2px #0052CC;">admin</span>
<span class="t" style="left:1311.7px;top:699.15px;font-size:14px;color:#172B4D;letter-spacing:0.080px;">2/01/2024</span>
<div class="r" style="left:1421px;top:698px;width:25px;height:16px;background:#0052CC;border-radius:8px;"></div>
<span class="t" style="left:1427.0px;top:700.14px;font-size:12px;color:#fff;letter-spacing:0.027px;-webkit-text-stroke:0.3px #fff;">12</span>
<svg style="left:1512px;top:698px" width="16" height="16" viewBox="0 0 16 16"><use href="#trash" fill="#3B4A6B"/></svg>
<svg style="left:1548px;top:696px" width="8" height="20" viewBox="0 0 8 20"><circle cx="4" cy="3" r="2" fill="#42526E"/><circle cx="4" cy="10" r="2" fill="#42526E"/><circle cx="4" cy="17" r="2" fill="#42526E"/></svg>
</body></html>
